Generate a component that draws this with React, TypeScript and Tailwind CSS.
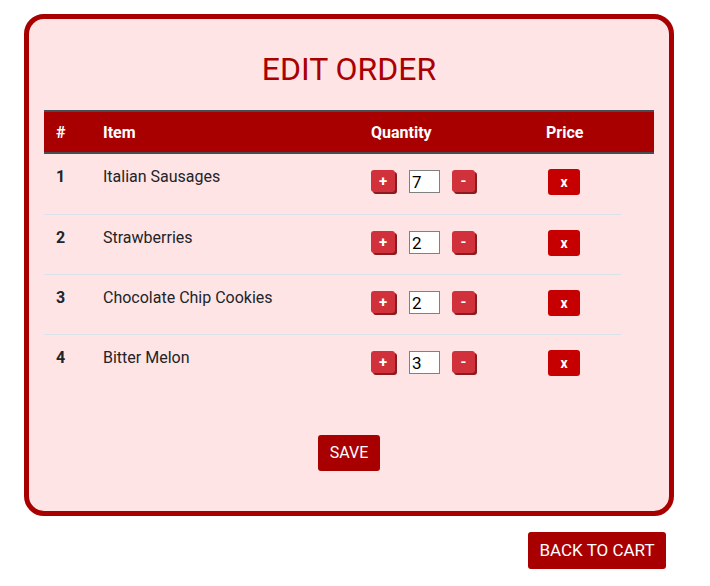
import { useState } from "react";

type Item = { id: number; name: string; qty: number };

const initialItems: Item[] = [
  { id: 1, name: "Italian Sausages", qty: 7 },
  { id: 2, name: "Strawberries", qty: 2 },
  { id: 3, name: "Chocolate Chip Cookies", qty: 2 },
  { id: 4, name: "Bitter Melon", qty: 3 },
];

const font = { fontFamily: "Roboto, 'Liberation Sans', sans-serif" };

export default function App() {
  const [items, setItems] = useState(initialItems);

  const changeQty = (id: number, delta: number) => {
    setItems((prev) =>
      prev.map((it) => (it.id === id ? { ...it, qty: Math.max(0, it.qty + delta) } : it))
    );
  };

  const removeItem = (id: number) => {
    setItems((prev) => prev.filter((it) => it.id !== id));
  };

  return (
    <div className="min-h-[586px] w-[710px] bg-white pt-[14px] pl-[24px] text-[#212529]" style={font}>
      <div className="w-[650px] h-[502px] rounded-[20px] border-[5px] border-[#a80000] bg-[#ffe4e5] px-[15px]">
        <h1 className="pt-[31px] mb-[22px] text-center text-[32px] leading-[38px] text-[#aa0000]">EDIT ORDER</h1>

        <div className="w-[610px]">
          <div className="grid grid-cols-[47px_268px_175px_120px] h-[44px] bg-[#a80000] border-y-2 border-[#454d55] text-white font-bold text-[16px] leading-[41px]">
            <div className="pl-3">#</div>
            <div className="pl-3">Item</div>
            <div className="pl-3">Quantity</div>
            <div className="pl-3">Price</div>
          </div>

          {items.map((it, i) => (
            <div key={it.id}>
              {i > 0 && <div className="w-[577px] border-t border-[#dbe3ea]" />}
              <div className={`grid grid-cols-[47px_268px_175px_120px] ${i === 0 ? "h-[60px]" : "h-[59px]"}`}>
                <div className="pl-3 pt-[11px] leading-6 text-[16px] font-bold">{it.id}</div>
                <div className="pl-3 pt-[11px] leading-6 text-[16px]">{it.name}</div>
                <div className="pl-3 pt-4 flex items-start">
                  <button
                    onClick={() => changeQty(it.id, 1)}
                    className="w-[24px] h-[22px] rounded-[3px] bg-[#d0313a] shadow-[2px_2px_0_#8a1b1f] text-white text-[15px] font-bold leading-[22px]"
                  >
                    +
                  </button>
                  <input
                    value={it.qty}
                    readOnly
                    className="ml-[14px] w-[31px] h-[23px] border border-[#808080] bg-white pl-[2px] text-[17px] leading-[21px] text-black outline-none"
                  />
                  <button
                    onClick={() => changeQty(it.id, -1)}
                    className="ml-[12px] w-[23px] h-[22px] rounded-[3px] bg-[#d0313a] shadow-[2px_2px_0_#8a1b1f] text-white text-[15px] font-bold leading-[22px]"
                  >
                    -
                  </button>
                </div>
                <div className="pl-[14px] pt-[15px]">
                  <button
                    onClick={() => removeItem(it.id)}
                    className="w-[32px] h-[26px] rounded-[3px] bg-[#c60000] text-white text-[14px] font-bold leading-[26px]"
                  >
                    x
                  </button>
                </div>
              </div>
            </div>
          ))}
        </div>

        <div className="mt-[41px] flex justify-center">
          <button className="h-[36px] px-[12px] rounded-[3px] bg-[#a80000] text-white text-[16px]">SAVE</button>
        </div>
      </div>

      <div className="w-[642px] mt-[16px] flex justify-end">
        <button className="h-[37px] w-[138px] rounded-[3px] bg-[#a80000] text-white text-[17px]">BACK TO CART</button>
      </div>
    </div>
  );
}
